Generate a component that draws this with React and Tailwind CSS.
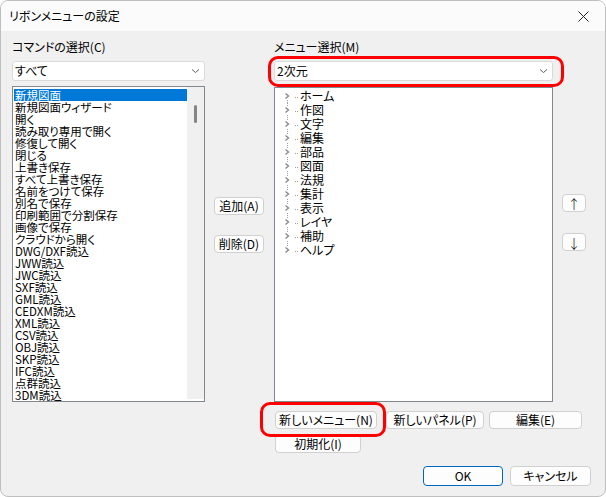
import React from 'react';

const commands = [
  '新規図面', '新規図面ウィザード', '開く', '読み取り専用で開く', '修復して開く', '閉じる',
  '上書き保存', 'すべて上書き保存', '名前をつけて保存', '別名で保存', '印刷範囲で分割保存',
  '画像で保存', 'クラウドから開く', 'DWG/DXF読込', 'JWW読込', 'JWC読込', 'SXF読込',
  'GML読込', 'CEDXM読込', 'XML読込', 'CSV読込', 'OBJ読込', 'SKP読込', 'IFC読込',
  '点群読込', '3DM読込',
];

const menus = ['ホーム', '作図', '文字', '編集', '部品', '図面', '法規', '集計', '表示', 'レイヤ', '補助', 'ヘルプ'];

function Btn({ className, children }) {
  return (
    <div className={`flex items-center justify-center bg-[#fdfdfd] border border-[#d0d0d0] rounded-[4px] text-[12px] leading-none text-black ${className}`}>
      {children}
    </div>
  );
}

function Combo({ value }) {
  return (
    <div className="h-[20px] bg-white border border-[#dadada] rounded-[3px] flex items-center justify-between pl-[2px] pr-[4px] text-[12px]">
      <span>{value}</span>
      <svg width="9" height="6" viewBox="0 0 9 6">
        <path d="M1 1.5 L4.5 4.5 L8 1.5" fill="none" stroke="#606060" strokeWidth="1" />
      </svg>
    </div>
  );
}

function TreeRow({ label, first, last }) {
  return (
    <div className="h-[14px] flex items-center">
      <svg width="19" height="14" viewBox="0 0 19 14" className="ml-[6px] shrink-0">
        <line x1="6.5" y1={first ? 7 : 0} x2="6.5" y2={last ? 7 : 14} stroke="#a0a0a0" strokeWidth="1" strokeDasharray="1 1" />
        <rect x="3" y="3" width="7" height="8" fill="#fff" />
        <path d="M4.5 4.5 L7.5 7 L4.5 9.5" fill="none" stroke="#8a8a8a" strokeWidth="1.4" />
        <rect x="14" y="8" width="1" height="1" fill="#a0a0a0" />
        <rect x="16" y="8" width="1" height="1" fill="#a0a0a0" />
      </svg>
      <span className="text-[12px] leading-[14px]">{label}</span>
    </div>
  );
}

export default function App() {
  return (
    <div className="relative w-[606px] h-[497px] bg-[#f0f0f0] border border-[#bfbfbf] rounded-[8px] overflow-hidden flex flex-col text-black font-['Noto_Sans_CJK_JP',sans-serif] [font-feature-settings:'palt']">
      {/* title bar */}
      <div className="h-[30px] bg-[#fbfbfb] flex items-center justify-between pl-[8px] pr-[16px] shrink-0">
        <span className="text-[12px]">リボンメニューの設定</span>
        <svg width="11" height="11" viewBox="0 0 11 11">
          <path d="M0.5 0.5 L10.5 10.5 M10.5 0.5 L0.5 10.5" stroke="#222" strokeWidth="1" />
        </svg>
      </div>

      {/* body */}
      <div className="flex pl-[11px] pt-[9px]">
        {/* commands */}
        <div className="w-[193px] flex flex-col">
          <div className="h-[14px] leading-[14px] text-[12px] mb-[7px]">コマンドの選択(C)</div>
          <Combo value="すべて" />
          <div className="mt-[5px] h-[316px] bg-white border border-[#828790] flex">
            <div className="flex-1 pt-[2px] pl-[1px]">
              {commands.map((c, i) => (
                <div
                  key={c}
                  className={`h-[12px] leading-[12px] text-[11.5px] pl-[1px] whitespace-nowrap ${i === 0 ? 'bg-[#0078d7] text-white' : ''}`}
                >
                  {c}
                </div>
              ))}
            </div>
            <div className="w-[17px] bg-[#f0f0f0] mb-[2px] pt-[18px] pl-[7px]">
              <div className="w-[3px] h-[18px] rounded-full bg-[#858585]" />
            </div>
          </div>
        </div>

        {/* add / remove */}
        <div className="ml-[9px] w-[50px] flex flex-col pt-[157px]">
          <Btn className="h-[18px]">追加(A)</Btn>
          <Btn className="h-[18px] mt-[20px]">削除(D)</Btn>
        </div>

        {/* menus */}
        <div className="ml-[10px] w-[279px] flex flex-col">
          <div className="h-[14px] leading-[14px] text-[12px] mb-[7px]">メニュー選択(M)</div>
          <Combo value="2次元" />
          <div className="mt-[6px] h-[315px] bg-white border border-[#828790] pt-[1px]">
            {menus.map((m, i) => (
              <TreeRow key={m} label={m} first={i === 0} last={i === menus.length - 1} />
            ))}
          </div>
        </div>

        {/* up / down */}
        <div className="ml-[9px] w-[24px] flex flex-col pt-[154px]">
          <Btn className="h-[18px] text-[13px] font-light">↑</Btn>
          <Btn className="h-[18px] mt-[21px] text-[13px] font-light">↓</Btn>
        </div>
      </div>

      {/* bottom buttons */}
      <div className="flex ml-[274px] mt-[9px]">
        <Btn className="w-[102px] h-[18px]">新しいメニュー(N)</Btn>
        <Btn className="w-[98px] h-[18px] ml-[9px]">新しいパネル(P)</Btn>
        <Btn className="w-[93px] h-[18px] ml-[5px]">編集(E)</Btn>
      </div>
      <div className="flex ml-[274px] mt-[6px]">
        <Btn className="w-[86px] h-[18px]">初期化(I)</Btn>
      </div>
      <div className="flex justify-end pr-[14px] mt-[13px]">
        <Btn className="w-[80px] h-[20px] !border-[#0067c0]">OK</Btn>
        <Btn className="w-[81px] h-[20px] ml-[7px]">キャンセル</Btn>
      </div>

      {/* annotation outlines */}
      <div className="absolute left-[267px] top-[55px] w-[296px] h-[31px] border-[3px] border-[#ff0000] rounded-[10px]" />
      <div className="absolute left-[259px] top-[401px] w-[126px] h-[35px] border-[3px] border-[#ff0000] rounded-[10px]" />
    </div>
  );
}
